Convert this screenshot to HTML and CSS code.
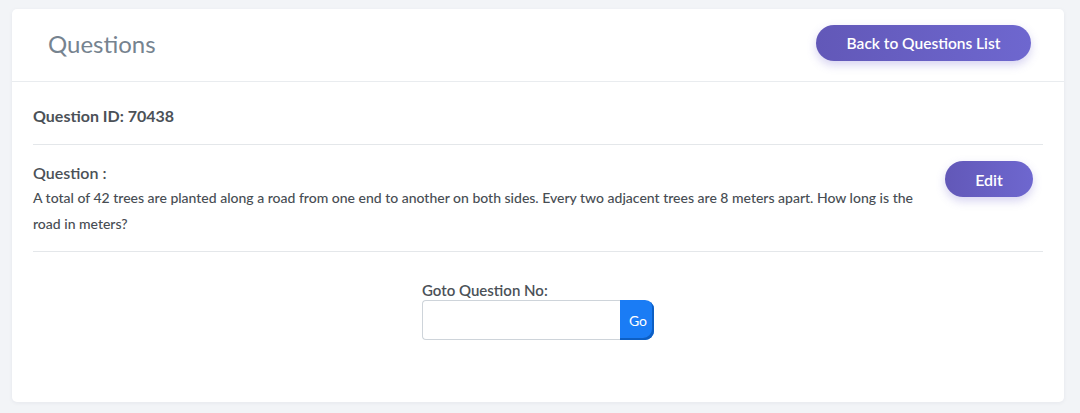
FILE: index.html
```html
<!DOCTYPE html>
<html lang="en">
<head>
<meta charset="utf-8">
<title>Questions</title>
<link rel="stylesheet" href="styles.css">
</head>
<body>
<div class="card">
  <div class="card-header">
    <h1 class="title">Questions</h1>
    <button class="btn-pill btn-back">Back to Questions List</button>
  </div>
  <div class="card-body">
    <div class="qid">Question ID: 70438</div>
    <hr class="sep">
    <div class="qrow">
      <div class="qtext">
        <div class="qlabel">Question :</div>
        <p class="qbody">A total of 42 trees are planted along a road from one end to another on both sides. Every two adjacent trees are 8 meters apart. How long is the road in meters?</p>
      </div>
      <div class="qaction">
        <button class="btn-pill btn-edit">Edit</button>
      </div>
    </div>
    <hr class="sep">
    <div class="goto">
      <div class="goto-group">
        <label class="goto-label">Goto Question No:</label>
        <div class="goto-input">
          <input type="text" class="input">
          <button class="btn-go">Go</button>
        </div>
      </div>
    </div>
  </div>
</div>
</body>
</html>
```

FILE: styles.css
```css
* { box-sizing: border-box; }
html, body {
  margin: 0;
  padding: 0;
  background: #f2f4f7;
  font-family: Lato, "Open Sans", "Liberation Sans", sans-serif;
}
body {
  padding: 9px 16px 11px 12px;
}
.card {
  background: #fff;
  border-radius: 5px;
  box-shadow: 0 1px 4px rgba(30, 40, 60, 0.06);
  height: 393px;
}
.card-header {
  height: 73px;
  border-bottom: 1px solid #e9ecef;
  display: flex;
  align-items: center;
  justify-content: space-between;
  padding: 0 33px 4px 36px;
}
.title {
  margin: 0;
  font-size: 24px;
  font-weight: 400;
  color: #76838f;
}
.btn-pill {
  border: none;
  border-radius: 18px;
  height: 36px;
  color: #fff;
  font-family: inherit;
  font-size: 15.5px;
  font-weight: 600;
  background: linear-gradient(90deg, #6258b8, #6e67cf);
  box-shadow: 0 4px 10px rgba(108, 96, 205, 0.28);
}
.btn-back {
  width: 215px;
}
.btn-edit {
  width: 88px;
  font-size: 16px;
}
.card-body {
  padding: 0 21px;
}
.qid {
  padding: 22px 0 16px;
  font-size: 16px;
  line-height: 24px;
  font-weight: 700;
  color: #4b5157;
}
.sep {
  margin: 0;
  border: 0;
  border-top: 1px solid #e4e7ea;
}
.qrow {
  display: flex;
  justify-content: space-between;
  padding: 16px 0 14px;
}
.qtext {
  width: 890px;
}
.qlabel {
  font-size: 16px;
  line-height: 24px;
  font-weight: 600;
  color: #4b5157;
}
.qbody {
  margin: 0;
  font-size: 14px;
  line-height: 26px;
  font-weight: 500;
  color: #474d53;
}
.qaction {
  padding: 0 10px 0 0;
}
.goto {
  display: flex;
  justify-content: center;
  padding-top: 28px;
}
.goto-group {
  display: flex;
  flex-direction: column;
}
.goto-label {
  font-size: 15px;
  line-height: 20px;
  font-weight: 600;
  color: #4b5157;
}
.goto-input {
  display: flex;
}
.input {
  width: 198px;
  height: 40px;
  border: 1px solid #ced4da;
  border-right: none;
  border-radius: 4px 0 0 4px;
  outline: none;
}
.btn-go {
  width: 34px;
  height: 40px;
  border: none;
  border-radius: 0 9px 9px 0;
  background: #1a7cf5;
  color: #fff;
  font-family: inherit;
  font-size: 14px;
  box-shadow: inset -2px -2px 0 #0d5fc4;
  padding: 0 0 0 2px;
}
```
